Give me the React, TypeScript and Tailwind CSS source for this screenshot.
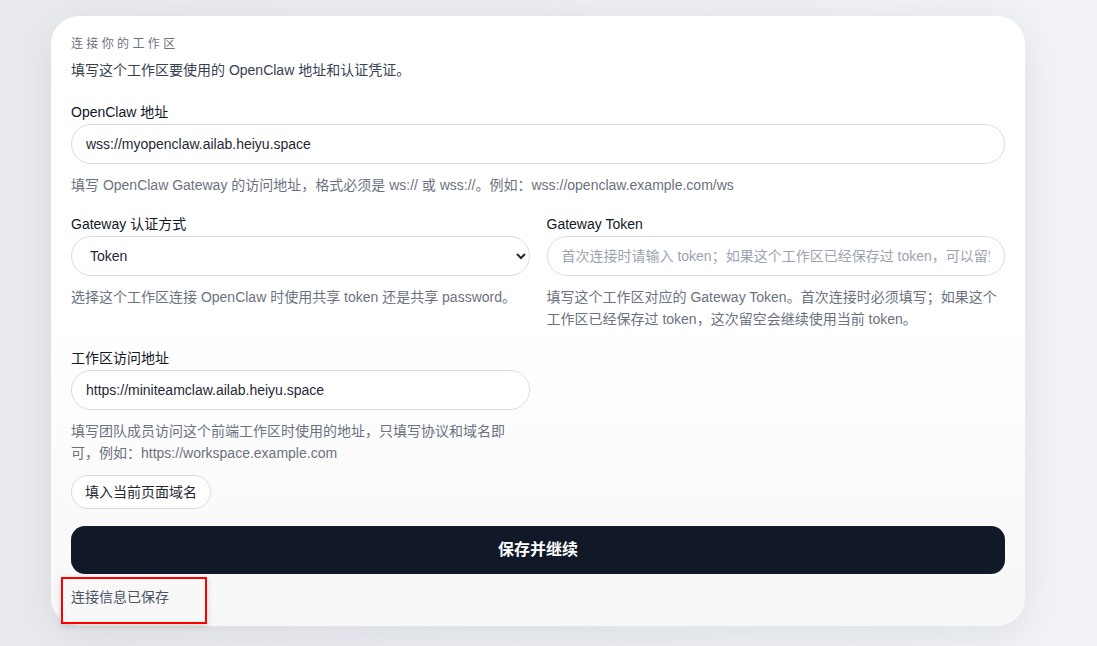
import React, { useState } from "react";

const FONT = {
  fontFamily: '"Liberation Sans", "Noto Sans CJK SC", sans-serif',
};

interface FieldProps {
  label: string;
  children: React.ReactNode;
  help: React.ReactNode;
}

const Field: React.FC<FieldProps> = ({ label, children, help }) => (
  <div className="flex flex-col">
    <label className="text-sm leading-5 text-[#111827] mb-0.5">{label}</label>
    {children}
    <p className="mt-2.5 text-sm leading-[22px] text-[#6b7280]">{help}</p>
  </div>
);

const inputClass =
  "h-10 w-full rounded-[20px] border border-[#dcdcdf] bg-white px-3.5 text-sm text-[#1f2937] outline-none placeholder:text-[#9ca3af]";

export default function App() {
  const [openclawUrl, setOpenclawUrl] = useState("wss://myopenclaw.ailab.heiyu.space");
  const [authMode, setAuthMode] = useState("token");
  const [token, setToken] = useState("");
  const [workspaceUrl, setWorkspaceUrl] = useState("https://miniteamclaw.ailab.heiyu.space");

  return (
    <div
      className="min-h-[646px] w-full bg-gradient-to-r from-[#e9eaee] via-[#eceef2] to-[#f1f3f7] pt-4 pl-[51px]"
      style={FONT}
    >
      <div className="w-[974px] rounded-[28px] bg-gradient-to-b from-white via-white to-[#f7f7f8] px-5 pt-5 pb-[19px] shadow-[0_8px_40px_rgba(15,23,42,0.08)]">
        {/* Header */}
        <div className="flex flex-col">
          <span className="text-xs leading-4 tracking-[0.28em] text-[#6b7280]">连接你的工作区</span>
          <p className="mt-2 text-sm leading-5 text-[#374151]">
            填写这个工作区要使用的 OpenClaw 地址和认证凭证。
          </p>
        </div>

        <div className="mt-[22px] flex flex-col gap-[18px]">
          <Field
            label="OpenClaw 地址"
            help="填写 OpenClaw Gateway 的访问地址，格式必须是 ws:// 或 wss://。例如：wss://openclaw.example.com/ws"
          >
            <input
              className={inputClass}
              value={openclawUrl}
              onChange={(e) => setOpenclawUrl(e.target.value)}
            />
          </Field>

          <div className="grid grid-cols-2 gap-x-[17px]">
            <Field
              label="Gateway 认证方式"
              help="选择这个工作区连接 OpenClaw 时使用共享 token 还是共享 password。"
            >
              <select
                className={`${inputClass} pr-2`}
                value={authMode}
                onChange={(e) => setAuthMode(e.target.value)}
              >
                <option value="token">Token</option>
                <option value="password">Password</option>
              </select>
            </Field>
            <Field
              label="Gateway Token"
              help="填写这个工作区对应的 Gateway Token。首次连接时必须填写；如果这个工作区已经保存过 token，这次留空会继续使用当前 token。"
            >
              <input
                className={inputClass}
                value={token}
                onChange={(e) => setToken(e.target.value)}
                placeholder="首次连接时请输入 token；如果这个工作区已经保存过 token，可以留空继续使用"
              />
            </Field>
          </div>

          <div className="grid grid-cols-2 gap-x-[17px]">
            <div className="flex flex-col">
              <Field
                label="工作区访问地址"
                help="填写团队成员访问这个前端工作区时使用的地址，只填写协议和域名即可，例如：https://workspace.example.com"
              >
                <input
                  className={inputClass}
                  value={workspaceUrl}
                  onChange={(e) => setWorkspaceUrl(e.target.value)}
                />
              </Field>
              <div className="mt-[11px]">
                <button
                  type="button"
                  className="h-[34px] rounded-full border border-[#dcdcdf] bg-white px-[13px] text-sm text-[#1f2937]"
                >
                  填入当前页面域名
                </button>
              </div>
            </div>
          </div>
        </div>

        <button
          type="button"
          className="mt-[17px] h-12 w-full rounded-[14px] bg-[#111827] text-base font-bold text-white"
        >
          保存并继续
        </button>

        <div className="relative mt-[13px]">
          <p className="text-sm leading-5 text-[#4b5563]">连接信息已保存</p>
          <div className="absolute left-[-10px] top-[-10px] h-[47px] w-[146px] border-2 border-[#ff0000] shadow-[0_2px_6px_rgba(0,0,0,0.15)]" />
        </div>
      </div>
    </div>
  );
}
